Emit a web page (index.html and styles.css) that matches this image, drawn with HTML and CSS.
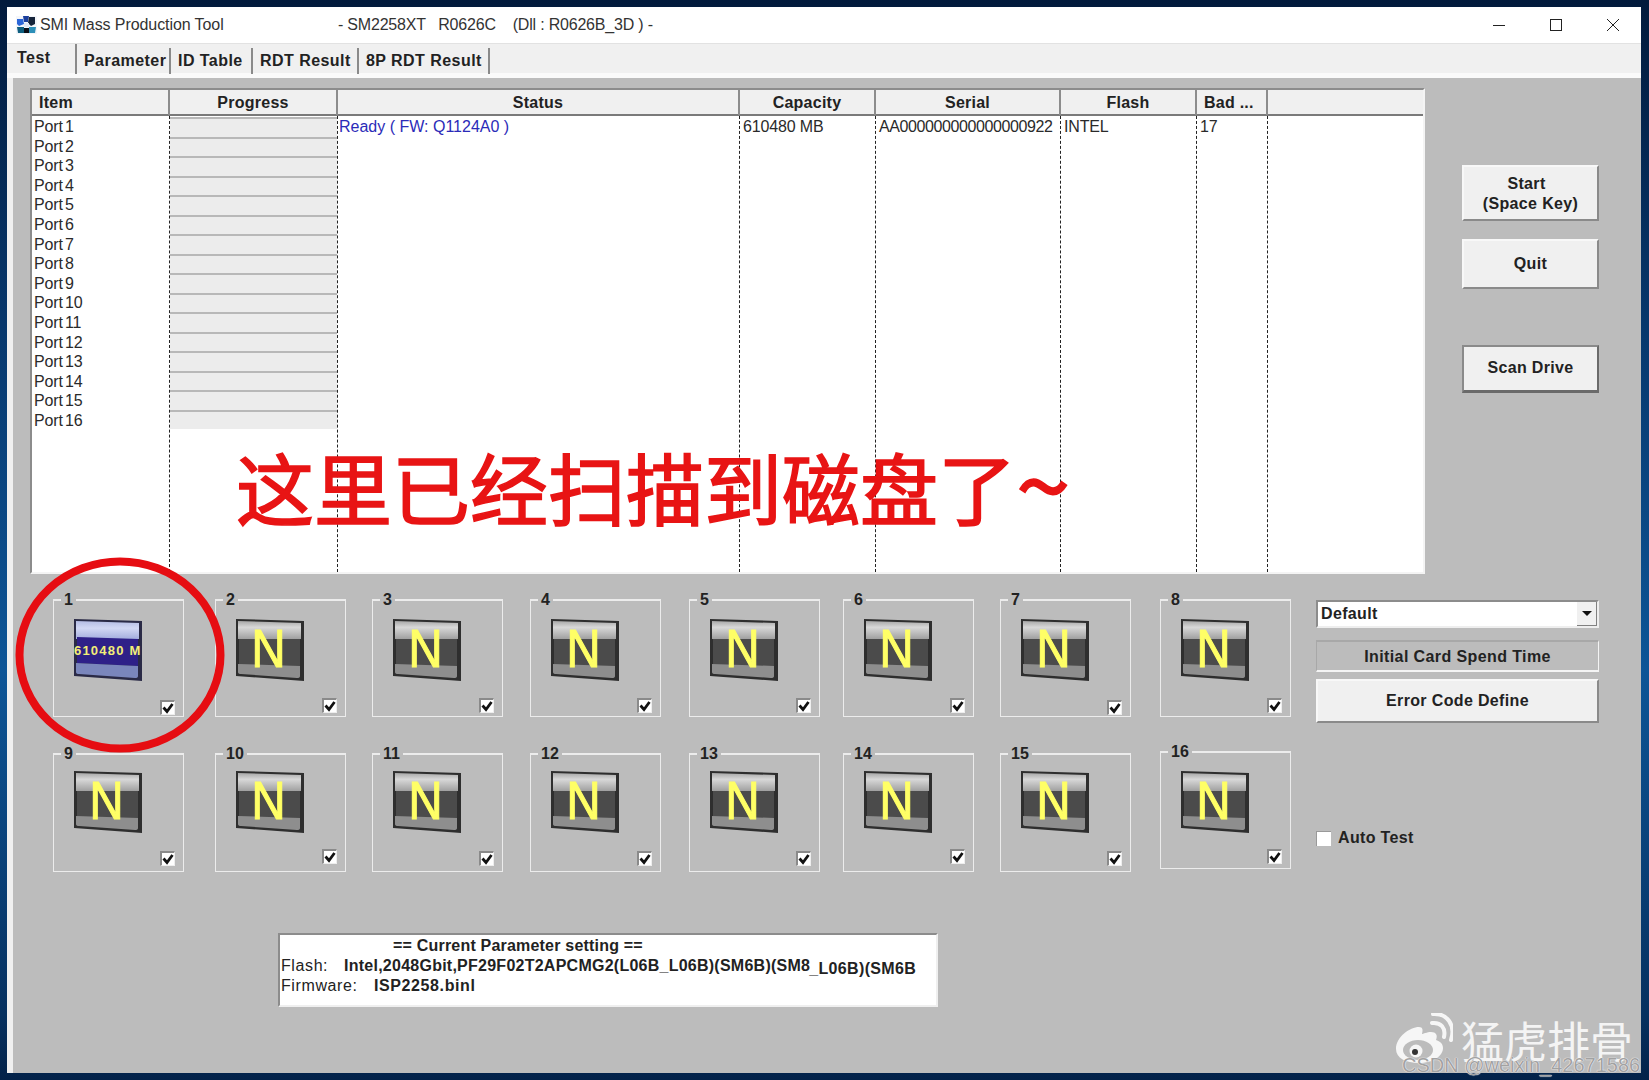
FILE: index.html
```html
<!DOCTYPE html>
<html lang="zh-CN">
<head>
<meta charset="utf-8">
<title>SMI Mass Production Tool</title>
<link rel="stylesheet" href="styles.css">
</head>
<body>
<svg class="sprite" aria-hidden="true">
  <symbol id="drive-n" viewBox="0 0 68 62">
    <defs>
      <linearGradient id="gt" x1="0" y1="0" x2="0" y2="1"><stop offset="0" stop-color="#a8a8a8"/><stop offset=".35" stop-color="#d8d8d8"/><stop offset="1" stop-color="#a0a0a0"/></linearGradient>
    </defs>
    <path d="M0 0 68 2V62L0 57Z" fill="#2e2e2e"/>
    <path d="M2 2 65 4V20H2Z" fill="url(#gt)"/>
    <path d="M3 20H64V47H3Z" fill="#4b4b4b"/>
    <path d="M2 45 64 47V57Q64 59 61 59L5 55Q2 55 2 53Z" fill="#8e8e8e"/>
    <text x="15.5" y="48" class="drive-letter" textLength="34" lengthAdjust="spacingAndGlyphs">N</text>
  </symbol>
  <symbol id="drive-b" viewBox="0 0 68 62">
    <defs>
      <linearGradient id="bt" x1="0" y1="0" x2="0" y2="1"><stop offset="0" stop-color="#b4bce4"/><stop offset=".4" stop-color="#d2d8f4"/><stop offset="1" stop-color="#a4aede"/></linearGradient>
    </defs>
    <path d="M0 0 68 2V62L0 57Z" fill="#2a2a46"/>
    <path d="M2 2 65 4V20H2Z" fill="url(#bt)"/>
    <path d="M3 18 64 20V47L3 44Z" fill="#2e2088"/>
    <path d="M2 44 64 47V57Q64 59 61 59L5 55Q2 55 2 53Z" fill="#7a86bc"/>
  </symbol>
  <symbol id="tick" viewBox="0 0 12 12">
    <path d="M1.5 5.5 5 9.5 10.5 2" fill="none" stroke="#111" stroke-width="2.8"/>
  </symbol>
</svg>

<div class="window">
  <header class="titlebar">
    <svg class="app-icon" viewBox="0 0 21 18" aria-hidden="true">
      <rect width="21" height="18" fill="#f4f6fa"/>
      <path d="M7 0h6l-1 6H8z" fill="#1c3f9c"/><path d="M1 3h6l1 5-5 2-2-2z" fill="#2b66d8"/>
      <path d="M13 1h6v7l-4 2-3-3z" fill="#16243a"/><path d="M8 7h5v4H8z" fill="#dfe8f6"/>
      <path d="M1 11h7v6H2z" fill="#0f5f80"/><path d="M13 11h7l-1 6h-6z" fill="#2c8fb8"/>
      <path d="M8 12h5v5H8z" fill="#0b0f18"/>
    </svg>
    <span class="app-name">SMI Mass Production Tool</span>
    <span class="app-version">- SM2258XT &nbsp; R0626C &nbsp;&nbsp; (Dll : R0626B_3D ) -</span>
    <div class="win-controls">
      <svg viewBox="0 0 12 12" aria-hidden="true"><path d="M0 6.5H12" stroke="#222" stroke-width="1"/></svg>
      <svg viewBox="0 0 12 12" aria-hidden="true"><rect x=".5" y=".5" width="11" height="11" fill="none" stroke="#222"/></svg>
      <svg viewBox="0 0 12 12" aria-hidden="true"><path d="M0 0 12 12M12 0 0 12" stroke="#222" stroke-width="1"/></svg>
    </div>
  </header>

  <nav class="tabs">
    <span class="tab tab-active">Test</span>
    <span class="tab tab-w1">Parameter</span>
    <span class="tab tab-w2">ID Table</span>
    <span class="tab tab-w3">RDT Result</span>
    <span class="tab tab-w4">8P RDT Result</span>
  </nav>

  <div class="client-frame">
    <main class="client">
      <section class="top-row">
        <div class="list">
          <div class="list-head">
            <div class="th th-left">Item</div>
            <div class="th">Progress</div>
            <div class="th">Status</div>
            <div class="th">Capacity</div>
            <div class="th">Serial</div>
            <div class="th">Flash</div>
            <div class="th th-left">Bad ...</div>
            <div class="th th-last"></div>
          </div>
          <div class="list-body">
            <div class="col col-item">
              <div class="row">Port 1</div><div class="row">Port 2</div><div class="row">Port 3</div><div class="row">Port 4</div>
              <div class="row">Port 5</div><div class="row">Port 6</div><div class="row">Port 7</div><div class="row">Port 8</div>
              <div class="row">Port 9</div><div class="row">Port 10</div><div class="row">Port 11</div><div class="row">Port 12</div>
              <div class="row">Port 13</div><div class="row">Port 14</div><div class="row">Port 15</div><div class="row">Port 16</div>
            </div>
            <div class="col col-progress">
              <div class="bar"></div><div class="bar"></div><div class="bar"></div><div class="bar"></div>
              <div class="bar"></div><div class="bar"></div><div class="bar"></div><div class="bar"></div>
              <div class="bar"></div><div class="bar"></div><div class="bar"></div><div class="bar"></div>
              <div class="bar"></div><div class="bar"></div><div class="bar"></div><div class="bar"></div>
            </div>
            <div class="col"><div class="row row-ready">Ready ( FW: Q1124A0 )</div></div>
            <div class="col"><div class="row">610480 MB</div></div>
            <div class="col"><div class="row row-serial">AA000000000000000922</div></div>
            <div class="col"><div class="row">INTEL</div></div>
            <div class="col"><div class="row">17</div></div>
            <div class="col col-last"></div>
          </div>
        </div>
        <div class="actions">
          <button class="btn btn-start"><span class="start-l1">Start</span><br>(Space Key)</button>
          <button class="btn btn-quit">Quit</button>
          <button class="btn btn-scan">Scan Drive</button>
        </div>
      </section>

      <section class="mid-row">
        <div class="cards">
          <div class="card"><span class="num">1</span><svg class="drive"><use href="#drive-b"/></svg><span class="cap">610480 M</span><span class="ck ck-low"><svg><use href="#tick"/></svg></span></div>
          <div class="card"><span class="num">2</span><svg class="drive"><use href="#drive-n"/></svg><span class="ck"><svg><use href="#tick"/></svg></span></div>
          <div class="card"><span class="num">3</span><svg class="drive"><use href="#drive-n"/></svg><span class="ck"><svg><use href="#tick"/></svg></span></div>
          <div class="card"><span class="num">4</span><svg class="drive"><use href="#drive-n"/></svg><span class="ck"><svg><use href="#tick"/></svg></span></div>
          <div class="card"><span class="num">5</span><svg class="drive"><use href="#drive-n"/></svg><span class="ck"><svg><use href="#tick"/></svg></span></div>
          <div class="card"><span class="num">6</span><svg class="drive"><use href="#drive-n"/></svg><span class="ck"><svg><use href="#tick"/></svg></span></div>
          <div class="card"><span class="num">7</span><svg class="drive"><use href="#drive-n"/></svg><span class="ck ck-low"><svg><use href="#tick"/></svg></span></div>
          <div class="card"><span class="num">8</span><svg class="drive"><use href="#drive-n"/></svg><span class="ck"><svg><use href="#tick"/></svg></span></div>
          <div class="card card-b"><span class="num">9</span><svg class="drive"><use href="#drive-n"/></svg><span class="ck ck-low"><svg><use href="#tick"/></svg></span></div>
          <div class="card card-b"><span class="num">10</span><svg class="drive"><use href="#drive-n"/></svg><span class="ck"><svg><use href="#tick"/></svg></span></div>
          <div class="card card-b"><span class="num">11</span><svg class="drive"><use href="#drive-n"/></svg><span class="ck ck-low"><svg><use href="#tick"/></svg></span></div>
          <div class="card card-b"><span class="num">12</span><svg class="drive"><use href="#drive-n"/></svg><span class="ck ck-low"><svg><use href="#tick"/></svg></span></div>
          <div class="card card-b"><span class="num">13</span><svg class="drive"><use href="#drive-n"/></svg><span class="ck ck-low"><svg><use href="#tick"/></svg></span></div>
          <div class="card card-b"><span class="num">14</span><svg class="drive"><use href="#drive-n"/></svg><span class="ck"><svg><use href="#tick"/></svg></span></div>
          <div class="card card-b"><span class="num">15</span><svg class="drive"><use href="#drive-n"/></svg><span class="ck ck-low"><svg><use href="#tick"/></svg></span></div>
          <div class="card card-c"><span class="num">16</span><svg class="drive"><use href="#drive-n"/></svg><span class="ck"><svg><use href="#tick"/></svg></span></div>
        </div>
        <div class="side">
          <div class="select"><span class="select-val">Default</span><span class="select-btn"></span></div>
          <div class="sunken">Initial Card Spend Time</div>
          <button class="btn btn-error">Error Code Define</button>
          <label class="auto"><span class="ck-plain"></span>Auto Test</label>
        </div>
      </section>

      <section class="param">
        <div class="param-title">== Current Parameter setting ==</div>
        <div class="param-line"><span class="param-key">Flash:</span><b class="param-val">Intel,2048Gbit,PF29F02T2APCMG2(L06B_L06B)(SM6B)(SM8</b><span class="param-low">_L06B)(SM6B</span></div>
        <div class="param-line"><span class="param-key">Firmware:</span><b class="param-fw">ISP2258.binl</b></div>
      </section>
    </main>
  </div>

  <div class="note">这里已经扫描到磁盘了<span class="note-tilde">~</span></div>
  <svg class="ring" viewBox="0 0 210 196" aria-hidden="true"><ellipse cx="105" cy="98" rx="100.5" ry="93.5" fill="none" stroke="#e60d12" stroke-width="8"/></svg>

  <div class="mark">
    <svg class="mark-logo" viewBox="0 0 58 50" aria-hidden="true">
      <path d="M24 14C15 14 1 24 1 36 1 45 11 50 24 50 38 50 48 43 48 35 48 30 44 28 41 27 43 22 41 19 36 19 32 19 28 21 27 21 28 17 28 14 24 14Z" fill="#f6f6f6"/>
      <ellipse cx="23" cy="37" rx="15" ry="10" fill="#bcbcbc"/>
      <circle cx="21" cy="38" r="6.5" fill="#f6f6f6"/>
      <circle cx="20" cy="39" r="3" fill="#333"/>
      <path d="M37 10C46 9 51 15 49 24M38 1C52 0 61 12 56 27" fill="none" stroke="#f6f6f6" stroke-width="4" stroke-linecap="round"/>
    </svg>
    <span class="mark-name">猛虎排骨</span>
    <span class="mark-csdn">CSDN @weixin_42671586</span>
  </div>
</div>
</body>
</html>
```
FILE: styles.css
```css
* { box-sizing: border-box; }
html, body { height: 100%; }
body {
  margin: 0;
  padding: 7px 8px 7px 7px;
  background: linear-gradient(180deg, #021a3c 0%, #07376c 30%, #0d5597 62%, #06305f 94%, #032249 100%);
  font-family: "Liberation Sans", Arial, sans-serif;
  color: #1c1c1c;
  overflow: hidden;
}
.sprite { position: absolute; width: 0; height: 0; }

.window {
  position: relative;
  width: 1634px;
  height: 1066px;
  background: #f0f0f0;
  display: flex;
  flex-direction: column;
}

/* title bar */
.titlebar {
  height: 37px;
  flex: none;
  background: #fff;
  border-bottom: 1px solid #e2e2e2;
  display: flex;
  align-items: center;
  padding-left: 9px;
  font-size: 16px;
  color: #333;
}
.app-icon { width: 21px; height: 18px; margin-right: 3px; }
.app-name { width: 298px; letter-spacing: -.08px; }
.app-version { letter-spacing: -.2px; }
.win-controls { margin-left: auto; display: flex; margin-right: 22px; gap: 45px; }
.win-controls svg { width: 12px; height: 12px; display: block; }

/* tabs */
.tabs {
  height: 34px;
  flex: none;
  display: flex;
  align-items: flex-start;
  background: linear-gradient(180deg, #f0f0f0 29px, #fafafa 29px);
  font-weight: bold;
  font-size: 16px;
  letter-spacing: .45px;
  color: #222;
}
.tab {
  height: 26px;
  margin-top: 4px;
  border-right: 2px solid #8a8a8a;
  padding: 4px 0 0 7px;
  white-space: nowrap;
}
.tab-active { width: 70px; height: 30px; margin-top: 0; padding: 5px 0 0 10px; }
.tab-w1 { width: 94px; }
.tab-w2 { width: 82px; }
.tab-w3 { width: 106px; }
.tab-w4 { width: 131px; }

/* client */
.client-frame { flex: 1; padding-left: 6px; min-height: 0; }
.client { height: 100%; background: #bcbcbc; padding: 10px 0 0 17px; }
.top-row { display: flex; align-items: flex-start; }

/* list */
.list {
  width: 1395px;
  height: 486px;
  background: #fff;
  border-left: 2px solid #8c8c8c;
  border-top: 2px solid #8c8c8c;
  border-right: 2px solid #f4f4f4;
  border-bottom: 2px solid #f4f4f4;
  display: flex;
  flex-direction: column;
}
.list-head, .list-body {
  display: grid;
  grid-template-columns: 138px 168px 402px 136px 185px 136px 71px 1fr;
}
.list-head {
  height: 24px;
  flex: none;
  background: #f0f0f0;
  border-bottom: 2px solid #7a7a7a;
  box-sizing: content-box;
  font-weight: bold;
  font-size: 16px;
  letter-spacing: .25px;
  color: #222;
}
.th {
  text-align: center;
  line-height: 25px;
  border-right: 2px solid #8c8c8c;
}
.th-left { text-align: left; padding-left: 7px; }
.th-last { border-right: 0; }
.list-body {
  flex: 1;
  min-height: 0;
  font-size: 16px;
  letter-spacing: -.15px;
  color: #2a2a2a;
}
.col { border-right: 1px dashed #222; padding: 1px 0 0 1px; }
.col-item { padding-left: 0; word-spacing: -2px; }
.col-progress { padding: 1px 0 0; }
.col-last { border-right: 0; }
.row { height: 19.6px; line-height: 20px; padding-left: 2px; white-space: nowrap; }
.row-ready { color: #2b2bb8; padding-left: 0; letter-spacing: 0; }
.row-serial { letter-spacing: -.4px; }
.bar { height: 19.5px; background: #ececec; border-top: 2px solid #b8b8b8; }

/* buttons */
.btn {
  display: block;
  background: #f0f0f0;
  border: 0;
  border-top: 2px solid #f8f8f8;
  border-left: 2px solid #f8f8f8;
  border-right: 2px solid #8a8a8a;
  border-bottom: 2px solid #8a8a8a;
  padding: 0;
  font-family: inherit;
  font-weight: bold;
  font-size: 16px;
  letter-spacing: .35px;
  line-height: 20px;
  color: #222;
  text-align: center;
}
.actions { margin-left: 37px; width: 137px; padding-top: 77px; }
.btn-start { width: 137px; height: 56px; padding-top: 2px; }
.start-l1 { display: inline-block; margin-right: 8px; }
.btn-quit { width: 137px; height: 50px; margin-top: 18px; }
.btn-scan {
  width: 137px;
  height: 48px;
  margin-top: 56px;
  padding-bottom: 2px;
  border-top-color: #8a8a8a;
  border-left-color: #8a8a8a;
  border-right-color: #6a6a6a;
  border-bottom: 3px solid #6a6a6a;
}

/* drive cards */
.mid-row { display: flex; align-items: flex-start; margin-top: 25px; margin-left: 23px; }
.cards {
  display: grid;
  grid-template-columns: 162px 157px 158px 159px 154px 157px 160px 131px;
  grid-template-rows: 154px 119px;
  align-items: start;
}
.card {
  position: relative;
  width: 131px;
  height: 118px;
  border: 1px solid #ececec;
  border-top-width: 2px;
  padding: 18px 0 0 20px;
}
.card-b { height: 119px; padding-top: 16px; }
.card-c { height: 118px; margin-top: -2px; padding-top: 18px; }
.num {
  position: absolute;
  left: 7px;
  top: -11px;
  padding: 0 3px;
  background: #bcbcbc;
  font-weight: bold;
  font-size: 16px;
  line-height: 20px;
  color: #222;
}
.drive { width: 68px; height: 62px; display: block; }
.drive-letter {
  font-family: "Liberation Sans", Arial, sans-serif;
  font-size: 54px;
  fill: #ffff66;
  stroke: #ffff66;
  stroke-width: 1.2px;
}
.cap {
  position: absolute;
  left: 20px;
  top: 42px;
  width: 69px;
  overflow: hidden;
  white-space: nowrap;
  font-weight: bold;
  font-size: 13px;
  letter-spacing: 1.2px;
  line-height: 16px;
  color: #f3ee78;
}
.ck {
  position: absolute;
  left: 106px;
  bottom: 3px;
  width: 15px;
  height: 15px;
  background: #fff;
  border-top: 2px solid #8a8a8a;
  border-left: 2px solid #8a8a8a;
  border-right: 1px solid #eee;
  border-bottom: 1px solid #eee;
}
.ck svg { display: block; width: 12px; height: 12px; }
.ck-low { bottom: 1px; }
.card-b .ck { bottom: 7px; }
.card-b .ck-low { bottom: 5px; }
.card-c .ck { bottom: 4px; }

/* side panel */
.side { width: 283px; margin-left: 25px; padding-top: 1px; }
.select {
  height: 28px;
  background: #fff;
  border-top: 2px solid #8c8c8c;
  border-left: 2px solid #8c8c8c;
  border-right: 2px solid #eee;
  border-bottom: 2px solid #eee;
  display: flex;
  justify-content: space-between;
  font-weight: bold;
  font-size: 16px;
  letter-spacing: .35px;
}
.select-val { padding: 3px 0 0 3px; color: #222; }
.select-btn {
  width: 20px;
  background: #f0f0f0;
  border-right: 1px solid #808080;
  border-bottom: 1px solid #808080;
  position: relative;
}
.select-btn::after {
  content: "";
  position: absolute;
  left: 5px;
  top: 9px;
  border-left: 5px solid transparent;
  border-right: 5px solid transparent;
  border-top: 5px solid #111;
}
.sunken {
  margin-top: 12px;
  height: 32px;
  border-top: 2px solid #a8a8a8;
  border-left: 1px solid #a8a8a8;
  border-bottom: 2px solid #f4f4f4;
  border-right: 1px solid #f4f4f4;
  text-align: center;
  font-weight: bold;
  font-size: 16px;
  letter-spacing: .4px;
  line-height: 30px;
  color: #222;
}
.btn-error { width: 283px; height: 44px; margin-top: 7px; }
.auto {
  display: flex;
  align-items: center;
  margin-top: 106px;
  font-weight: bold;
  font-size: 16px;
  letter-spacing: .35px;
  color: #222;
}
.ck-plain {
  width: 15px;
  height: 15px;
  margin-right: 7px;
  background: #fff;
  border-top: 1px solid #999;
  border-left: 1px solid #999;
}

/* parameter box */
.param {
  margin: 61px 0 0 248px;
  width: 660px;
  height: 74px;
  background: #fff;
  border-top: 2px solid #8c8c8c;
  border-left: 2px solid #8c8c8c;
  border-right: 2px solid #efefef;
  border-bottom: 2px solid #efefef;
  padding: 1px 0 0 1px;
  font-size: 16px;
  line-height: 20px;
  color: #222;
}
.param-title { padding-left: 112px; font-weight: bold; letter-spacing: .2px; }
.param-line { display: flex; white-space: nowrap; }
.param-key { width: 63px; letter-spacing: .6px; }
.param-val { letter-spacing: .25px; }
.param-low { font-weight: bold; letter-spacing: .35px; position: relative; top: 3px; margin-left: -1px; }
.param-fw { margin-left: 30px; letter-spacing: .6px; }

/* annotations drawn over the window */
.note {
  position: absolute;
  left: 229px;
  top: 440px;
  font-family: "Noto Sans CJK SC", sans-serif;
  font-weight: 400;
  -webkit-text-stroke: 1.6px #e81414;
  font-size: 78px;
  line-height: 78px;
  color: #e81414;
  white-space: nowrap;
}
.note-tilde { font-size: 98px; line-height: 0; position: relative; top: 3px; }
.ring { position: absolute; left: 8px; top: 550px; width: 210px; height: 196px; }
.mark { position: absolute; left: 1388px; top: 1006px; width: 240px; height: 58px; }
.mark-logo { position: absolute; left: 0; top: 0; width: 58px; height: 50px; }
.mark-name {
  position: absolute;
  left: 66px;
  top: 3px;
  font-family: "Noto Sans CJK SC", sans-serif;
  font-size: 43px;
  line-height: 46px;
  color: #f4f4f4;
  white-space: nowrap;
}
.mark-csdn {
  position: absolute;
  left: 7px;
  top: 40px;
  font-size: 20px;
  line-height: 24px;
  color: #a2a2a2;
  text-shadow: 0 0 1px #fff, 0 0 1px #fff;
  white-space: nowrap;
}
```
